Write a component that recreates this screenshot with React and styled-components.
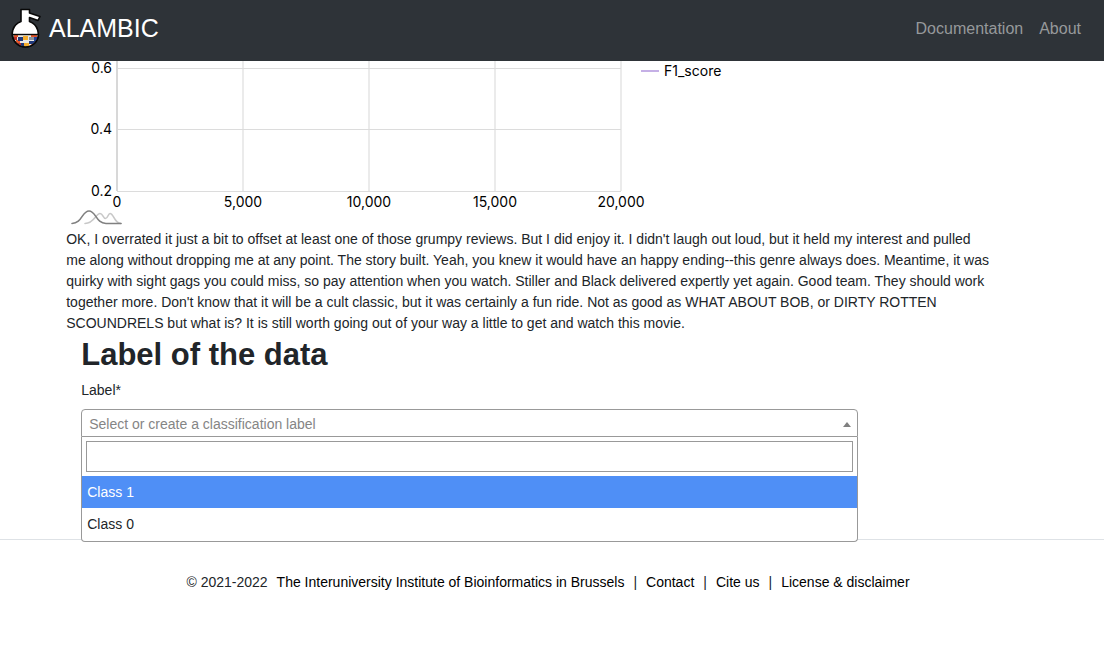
import React, { useState } from "react";
import styled, { createGlobalStyle } from "styled-components";

const GlobalStyle = createGlobalStyle`
  *, *::before, *::after { box-sizing: border-box; }
  body {
    margin: 0;
    background: #fff;
    color: #212529;
    font-family: "Liberation Sans", Arial, sans-serif;
    font-size: 14px;
    line-height: 21px;
  }
`;

const Navbar = styled.header`
  position: sticky;
  top: 0;
  z-index: 10;
  display: flex;
  align-items: center;
  justify-content: space-between;
  height: 61px;
  padding: 0 23px 5px 9px;
  background: #2e3338;
`;

const Brand = styled.a`
  display: flex;
  align-items: center;
  gap: 7px;
  color: #fff;
  font-size: 25px;
  line-height: 40px;
  text-decoration: none;
`;

const NavLinks = styled.nav`
  display: flex;
  gap: 16px;
  padding-top: 2px;
`;

const NavLink = styled.a`
  color: #96999b;
  font-size: 16px;
  line-height: 24px;
  text-decoration: none;
`;

const Main = styled.main`
  width: 88%;
  margin: 0 auto;
`;

const Chart = styled.svg`
  display: block;
  overflow: visible;
  font-family: Inter, sans-serif;
  font-size: 14px;
  fill: #000;
`;

const Review = styled.p`
  margin: 0;
  padding-right: 46px;
`;

const LabelForm = styled.form`
  padding: 0 15px 36px;
  min-height: 205px;
`;

const Title = styled.h1`
  margin: 0;
  font-size: 31px;
  line-height: 42px;
  font-weight: 700;
`;

const FieldLabel = styled.label`
  display: block;
  margin: 4px 0 8px;
`;

const Picker = styled.div`
  position: relative;
  width: calc(80% + 24px);
  max-width: 100%;
`;

const PickerButton = styled.button`
  display: flex;
  align-items: center;
  justify-content: space-between;
  width: 100%;
  height: 28px;
  padding: 2px 6px 0 7px;
  border: 1px solid #999;
  border-radius: 4px 4px 0 0;
  background: #fff;
  color: #858585;
  font: inherit;
  text-align: left;
`;

const Arrow = styled.span`
  border: 4px solid transparent;
  border-top: 0;
  border-bottom: 5px solid #808080;
`;

const Dropdown = styled.div`
  position: absolute;
  top: 100%;
  left: 0;
  right: 0;
  border: 1px solid #999;
  border-top: 0;
  border-radius: 0 0 4px 4px;
  background: #fff;
`;

const SearchBox = styled.div`
  padding: 4px;
`;

const SearchInput = styled.input`
  display: block;
  width: 100%;
  height: 31px;
  padding: 4px;
  border: 1px solid #999;
  border-radius: 0;
  outline: 0;
  font: inherit;
`;

const Options = styled.ul`
  margin: 0;
  padding: 0 0 1px;
  list-style: none;
`;

const Option = styled.li`
  padding: 6px 5px 5px;
  color: ${(p) => (p.$active ? "#fff" : "#212529")};
  background: ${(p) => (p.$active ? "#4f8ff6" : "transparent")};
`;

const Footer = styled.footer`
  display: flex;
  flex-wrap: wrap;
  justify-content: center;
  gap: 9px;
  padding: 32px 8px 32px 0;
  border-top: 1px solid #dee2e6;
`;

const FooterLink = styled.a`
  color: #000;
  text-decoration: none;
`;

function Logo() {
  return (
    <svg width="33" height="42" viewBox="0 0 33 42" aria-hidden="true">
      <defs>
        <clipPath id="bulb">
          <circle cx="16.500" cy="27" r="12.500" />
        </clipPath>
      </defs>
      <path
        d="M12 2.500H20.500V6L31 9.500L29 13.500L20.500 10.500V14.500A13 13 0 1 1 12 14.500Z"
        fill="#fff" stroke="#080808" strokeWidth="1.600" strokeLinejoin="round"
      />
      <g clipPath="url(#bulb)">
        <path d="M3 27H30V40H3Z" fill="#ece9e2" />
        <path d="M5 27H9V30H5ZM22 28H28V30H22ZM7 33H11V36H7ZM22 35H25V38H22Z" fill="#e4572b" />
        <path d="M9 30H14V34H9ZM20 34H26V37H20ZM12 36H15V40H12Z" fill="#203a7c" />
        <path d="M14 29H19V33H14ZM15 36H20V40H15Z" fill="#f6ae2d" />
        <path d="M20 30H25V33H20Z" fill="#8b939b" />
        <path d="M25 30H29V34H25Z" fill="#24449a" />
        <path d="M4 30H8V33H4ZM9 36H12V40H9Z" fill="#b52d28" />
      </g>
      <path d="M4 27.500H29" stroke="#080808" strokeWidth="1.400" />
      <path d="M3.500 27A13 13 0 0 0 29.500 27" fill="none" stroke="#080808" strokeWidth="1.600" />
    </svg>
  );
}

const xTicks = [
  [51, "0"],
  [177, "5,000"],
  [303, "10,000"],
  [429, "15,000"],
  [555, "20,000"],
];
const yTicks = [
  [7, "0.6"],
  [68, "0.4"],
  [130, "0.2"],
];

function ScoreChart() {
  return (
    <Chart width="670" height="168" role="img" aria-label="F1 score chart">
      {xTicks.map(([x, text]) => (
        <g key={text}>
          <path d={`M${x} 0V130`} stroke="#ebebeb" strokeWidth="2" />
          <text x={x} y="146" textAnchor="middle">{text}</text>
        </g>
      ))}
      {yTicks.map(([y, text]) => (
        <g key={text}>
          <path d={`M51 ${y + 0.5}H555`} stroke="#dcdcdc" />
          <text x="46" y={y + 5} textAnchor="end">{text}</text>
        </g>
      ))}
      <path d="M51 0V130" stroke="#d8d8d8" strokeWidth="2" />
      <path d="M575 10H593" stroke="#c5b0e6" strokeWidth="2" />
      <text x="598" y="15">F1_score</text>
      <g fill="none" strokeLinecap="round">
        <path
          d="M19 162.500C28 162.500 30 152.500 34 152.500C37 152.500 37 157.500 39.500 157.500C42 157.500 42 152.500 44 152.500C48 152.500 48 162.500 55 162.500"
          stroke="#c8c8c8" strokeWidth="1.600"
        />
        <path
          d="M6 162.500C16 162.500 16 150 23 150C30 150 30 162.500 40 162.500H55"
          stroke="#808080" strokeWidth="1.600"
        />
      </g>
    </Chart>
  );
}

const review =
  "OK, I overrated it just a bit to offset at least one of those grumpy reviews. But I did enjoy it. I didn't laugh out loud, but it held my interest and pulled me along without dropping me at any point. The story built. Yeah, you knew it would have an happy ending--this genre always does. Meantime, it was quirky with sight gags you could miss, so pay attention when you watch. Stiller and Black delivered expertly yet again. Good team. They should work together more. Don't know that it will be a cult classic, but it was certainly a fun ride. Not as good as WHAT ABOUT BOB, or DIRTY ROTTEN SCOUNDRELS but what is? It is still worth going out of your way a little to get and watch this movie.";

export default function App() {
  const [active, setActive] = useState("Class 1");
  return (
    <>
      <GlobalStyle />
      <Navbar>
        <Brand href="#">
          <Logo />
          ALAMBIC
        </Brand>
        <NavLinks>
          <NavLink href="#documentation">Documentation</NavLink>
          <NavLink href="#about">About</NavLink>
        </NavLinks>
      </Navbar>
      <Main>
        <ScoreChart />
        <Review>{review}</Review>
        <LabelForm>
          <Title>Label of the data</Title>
          <FieldLabel htmlFor="label">Label*</FieldLabel>
          <Picker>
            <PickerButton id="label" type="button" aria-haspopup="listbox" aria-expanded="true">
              Select or create a classification label
              <Arrow />
            </PickerButton>
            <Dropdown>
              <SearchBox>
                <SearchInput type="search" aria-label="Search labels" />
              </SearchBox>
              <Options role="listbox" aria-label="Labels">
                {["Class 1", "Class 0"].map((name) => (
                  <Option
                    key={name}
                    role="option"
                    aria-selected={active === name}
                    $active={active === name}
                    onMouseEnter={() => setActive(name)}
                  >
                    {name}
                  </Option>
                ))}
              </Options>
            </Dropdown>
          </Picker>
        </LabelForm>
      </Main>
      <Footer>
        <span>© 2021-2022</span>
        <FooterLink href="#institute">The Interuniversity Institute of Bioinformatics in Brussels</FooterLink>
        <span>|</span>
        <FooterLink href="#contact">Contact</FooterLink>
        <span>|</span>
        <FooterLink href="#cite">Cite us</FooterLink>
        <span>|</span>
        <FooterLink href="#license">License &amp; disclaimer</FooterLink>
      </Footer>
    </>
  );
}
